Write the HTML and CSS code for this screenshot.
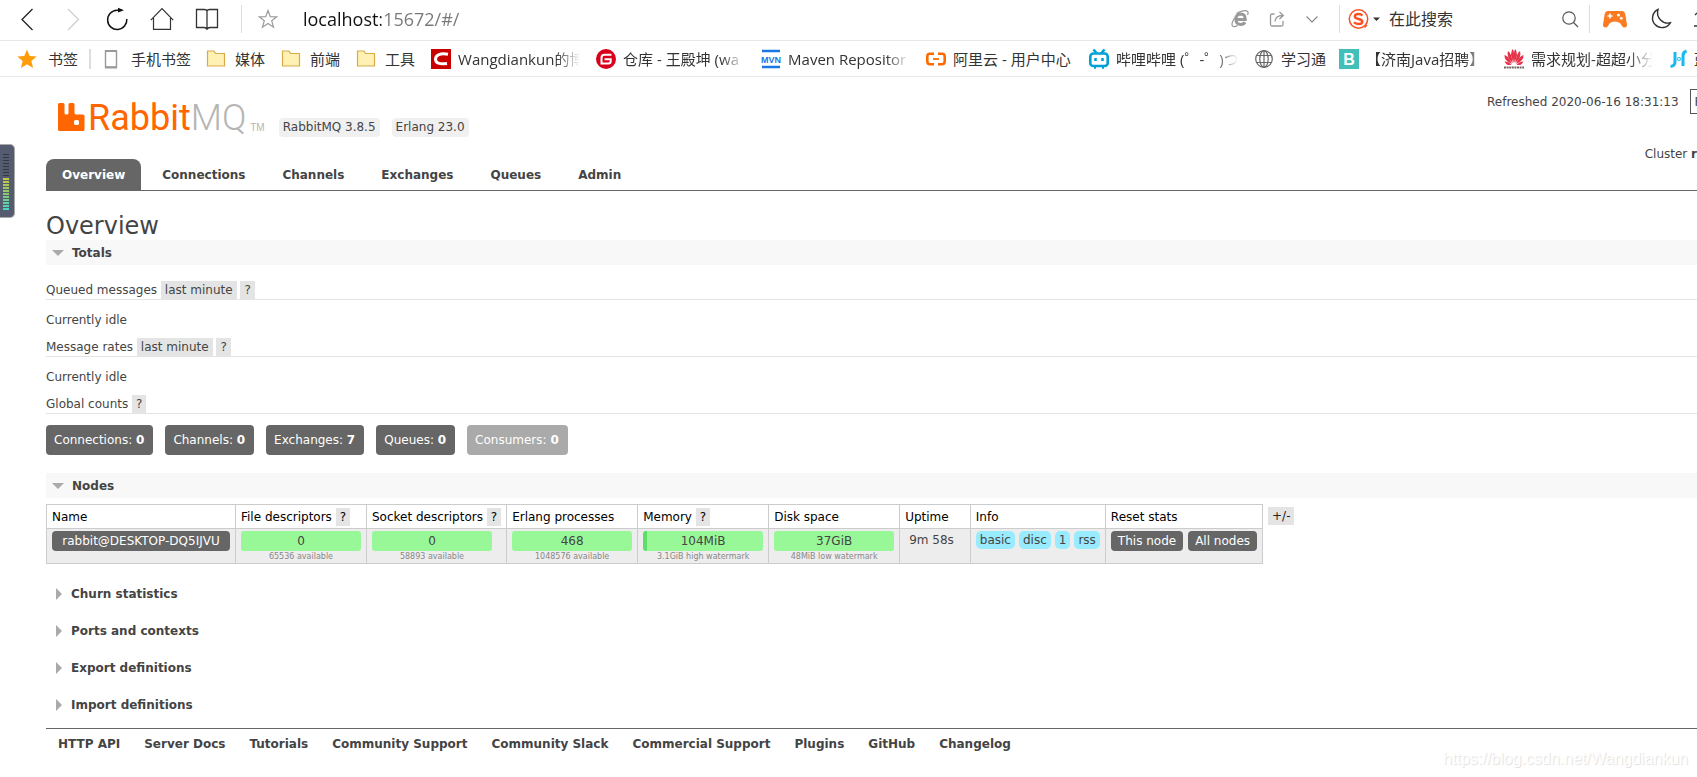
FILE: index.html
```html
<!DOCTYPE html>
<html lang="zh-CN">
<head>
<meta charset="utf-8">
<title>RabbitMQ Management</title>
<link rel="stylesheet" href="styles.css">
</head>
<body>
<div class="toolbar">
  <div class="nav-buttons">
    <button class="icon-button" aria-label="Back"><svg width="24" height="24" viewBox="0 0 24 24" fill="none" stroke="#222" stroke-width="1.300"><path d="M17.500 2L7 12.500L17.500 23"/></svg></button>
    <button class="icon-button" aria-label="Forward"><svg width="24" height="24" viewBox="0 0 24 24" fill="none" stroke="#ccc" stroke-width="1.200"><path d="M8 2L18.500 12.500L8 23"/></svg></button>
    <button class="icon-button" aria-label="Reload"><svg width="24" height="24" viewBox="0 0 24 24" fill="none" stroke="#111" stroke-width="1.500"><path d="M17 3.300H12A9.600 9.600 0 1 0 21.800 12"/><path d="M13 .800L19 3.200L13 5.500Z" fill="#111" stroke="none"/></svg></button>
    <button class="icon-button" aria-label="Home"><svg width="24" height="24" viewBox="0 0 24 24" fill="none" stroke="#333" stroke-width="1.200"><path d="M.800 13.200L12 1.500L23.200 13.200M3.500 11V22.300H20.500V11"/></svg></button>
    <button class="icon-button" aria-label="Reading list"><svg width="24" height="24" viewBox="0 0 24 24" fill="none" stroke="#333" stroke-width="1.300"><path d="M12 4Q11.500 2.500 9.500 2.500H1.500V20.500H9Q11.500 20.500 12 22.500Q12.500 20.500 15 20.500H22.500V2.500H14.500Q12.500 2.500 12 4V22"/></svg></button>
  </div>
  <span class="divider"></span>
  <button class="icon-button favorite" aria-label="Favorite"><svg width="20" height="20" viewBox="0 0 20 20" fill="none" stroke="#999" stroke-width="1.200"><path d="M10 1.500L12.300 7.600L18.800 7.800L13.700 11.800L15.500 18.200L10 14.500L4.500 18.200L6.300 11.800L1.200 7.800L7.700 7.600Z"/></svg></button>
  <input class="address" type="text" aria-label="Address" value="localhost:15672/#/">
  <div class="page-actions">
    <button class="icon-button" aria-label="Compatibility mode"><svg width="18" height="18" viewBox="0 0 18 18" fill="none" stroke="#999"><path d="M5 9.500H14.300Q14.300 4 9.800 4Q4.800 4.200 4.800 9.500Q5 14.500 9.800 14.500Q12.800 14.500 14 12.300" stroke-width="3"/><path d="M5.500 3.500Q14-1 16.800 1.700Q17.500 3 16.500 5M3.500 8Q-.500 14.500 1.800 16.300Q3.500 17.300 6.500 15.500" stroke-width="1.200"/></svg></button>
    <button class="icon-button" aria-label="Share"><svg width="16" height="16" viewBox="0 0 16 16" fill="none" stroke="#999" stroke-width="1.300"><path d="M5.500 3H3Q1.500 3 1.500 4.500V13.500Q1.500 15 3 15H12.500Q14 15 14 13.500V10"/><path d="M6 10.500Q6.500 4.500 13.500 4.500M10.500 1L14.300 4.500L10.500 8"/></svg></button>
    <button class="icon-button" aria-label="More"><svg width="14" height="14" viewBox="0 0 14 14" fill="none" stroke="#888" stroke-width="1.200"><path d="M1.500 4.500L7 10L12.500 4.500"/></svg></button>
  </div>
  <span class="divider"></span>
  <button class="icon-button engine" aria-label="Search engine"><svg width="32" height="22" viewBox="0 0 32 22"><circle cx="10.500" cy="11" r="9.200" fill="none" stroke="#fb5022" stroke-width="1.500"/><path d="M14.500 7.500Q13 6 10.500 6Q6.800 6 6.800 8.500Q6.800 10.300 10.500 11Q14.300 11.700 14.300 13.700Q14.300 16 10.500 16Q7.500 16 6 14.300" fill="none" stroke="#fb5022" stroke-width="2.400"/><path d="M16.500 19.500L19 17" stroke="#fb5022" stroke-width="1.500"/><path d="M25 9.500H32L28.500 13Z" fill="#333"/></svg></button>
  <input class="search" type="text" aria-label="Search" placeholder="在此搜索">
  <button class="icon-button" aria-label="Run search"><svg width="18" height="18" viewBox="0 0 18 18" fill="none" stroke="#555" stroke-width="1.200"><circle cx="8" cy="8" r="6.200"/><path d="M12.500 12.500L17 17"/></svg></button>
  <span class="divider search-end"></span>
  <div class="tool-actions">
    <button class="icon-button" aria-label="Games"><svg width="26" height="20" viewBox="0 0 26 20"><path d="M6 2H20Q22.500 2 23.300 5L25 16Q25 18.500 22 18.500Q20.500 18.500 18.500 14.500Q16 12.500 13 12.500Q10 12.500 7.500 14.500Q5.500 18.500 4 18.500Q1 18.500 1 16L2.700 5Q3.500 2 6 2Z" fill="#fb7a22"/><path d="M8 4.500V9.500M5.500 7H10.500" stroke="#fff" stroke-width="1.500"/><circle cx="16.500" cy="6.200" r="1.400" fill="#fff"/><circle cx="19.300" cy="9.300" r="1.400" fill="#fff"/></svg></button>
    <button class="icon-button" aria-label="Night mode"><svg width="22" height="22" viewBox="0 0 22 22" fill="none" stroke="#333" stroke-width="1.400"><path d="M8 1.500A9.500 9.500 0 1 0 20.300 14.800A10.500 10.500 0 0 1 8 1.500Z"/></svg></button>
    <button class="icon-button clipped" aria-label="Downloads"><svg width="20" height="20" viewBox="0 0 20 20" fill="none" stroke="#333" stroke-width="1.400"><path d="M0 17H20M1 6L3 4"/></svg></button>
  </div>
</div>

<nav class="bookmarks" aria-label="书签">
  <a class="bookmark root" href="#"><svg width="20" height="20" viewBox="0 0 20 20"><path d="M10 .500L12.700 7L19.700 7.400L14.300 11.900L16.100 19L10 15.200L3.900 19L5.700 11.900L.300 7.400L7.300 7Z" fill="#ff9c08"/></svg><span class="label">书签</span></a>
  <span class="bar"></span>
  <a class="bookmark phone" href="#"><svg width="14" height="20" viewBox="0 0 14 20"><rect x="1.500" y="2" width="11" height="16" fill="#fff" stroke="#999" stroke-width="1.400"/><path d="M1 2H13M1 18.500H13" stroke="#999" stroke-width="2"/></svg><span class="label">手机书签</span></a>
  <a class="bookmark folder" href="#"><svg width="20" height="20" viewBox="0 0 20 20"><path d="M1.500 2H8L9.500 4.500H18.500V17H1.500Z" fill="#fff0b3" stroke="#d8ab47" stroke-width="1.200"/></svg><span class="label">媒体</span></a>
  <a class="bookmark folder" href="#"><svg width="20" height="20" viewBox="0 0 20 20"><path d="M1.500 2H8L9.500 4.500H18.500V17H1.500Z" fill="#fff0b3" stroke="#d8ab47" stroke-width="1.200"/></svg><span class="label">前端</span></a>
  <a class="bookmark folder" href="#"><svg width="20" height="20" viewBox="0 0 20 20"><path d="M1.500 2H8L9.500 4.500H18.500V17H1.500Z" fill="#fff0b3" stroke="#d8ab47" stroke-width="1.200"/></svg><span class="label">工具</span></a>
  <a class="bookmark long" href="#"><svg width="20" height="20" viewBox="0 0 20 20"><rect width="20" height="20" fill="#c90000"/><path d="M17 5.200Q5 3.500 4.500 10Q4.500 16.200 16 14.500" fill="none" stroke="#fff" stroke-width="3"/></svg><span class="label">Wangdiankun的博</span></a>
  <a class="bookmark long" href="#"><svg width="20" height="20" viewBox="0 0 20 20"><circle cx="10" cy="10" r="10" fill="#d8001b"/><path d="M15.500 5.800H8.500Q5.500 5.800 5.500 8.800V14.500H12.500Q14.700 14.500 14.700 12.300V10.200H8.500" fill="none" stroke="#fff" stroke-width="2"/></svg><span class="label">仓库 - 王殿坤 (wa</span></a>
  <a class="bookmark long" href="#"><svg width="20" height="20" viewBox="0 0 20 20"><path d="M1 2H19M1 18H19" stroke="#1b77e4" stroke-width="2.600"/><text x="10" y="13.500" text-anchor="middle" class="mvn">MVN</text></svg><span class="label">Maven Repositor</span></a>
  <a class="bookmark long plain" href="#"><svg width="20" height="20" viewBox="0 0 20 20" fill="none" stroke="#ff6a00" stroke-width="2.600"><path d="M8 4.800H4Q1.300 4.800 1.300 7.500V12.500Q1.300 15.200 4 15.200H8M12 4.800H16Q18.700 4.800 18.700 7.500V12.500Q18.700 15.200 16 15.200H12"/><path d="M7 10H13" stroke-width="1.800"/></svg><span class="label">阿里云 - 用户中心</span></a>
  <a class="bookmark long" href="#"><svg width="20" height="20" viewBox="0 0 20 20" fill="none" stroke="#00a1d6" stroke-width="2.600"><rect x="1.300" y="4.500" width="17.400" height="12.500" rx="3"/><path d="M4.500 .500L7.500 4M15.500 .500L12.500 4M5 18.500H7M13 18.500H15"/><path d="M6.500 9V12M13.500 9V12"/></svg><span class="label">哔哩哔哩 (゜-゜)つ</span></a>
  <a class="bookmark globe" href="#"><svg width="20" height="20" viewBox="0 0 20 20" fill="none" stroke="#666" stroke-width="1.200"><circle cx="10" cy="10" r="8.300"/><ellipse cx="10" cy="10" rx="4.200" ry="8.300"/><path d="M10 1.700V18.300M2.600 6.500H17.400M2.600 13.500H17.400"/></svg><span class="label">学习通</span></a>
  <a class="bookmark long" href="#"><svg width="20" height="20" viewBox="0 0 20 20"><rect width="20" height="20" fill="#41bfb8"/><text x="10" y="16" text-anchor="middle" class="boss">B</text></svg><span class="label">【济南Java招聘】</span></a>
  <a class="bookmark long" href="#"><svg width="20" height="20" viewBox="0 0 20 20"><g fill="#e8344a"><path d="M9.500 14Q5 4 8.800 0Q11 3 9.500 14ZM10.500 14Q9 3 11.200 0Q15 4 10.500 14Z"/><path d="M8.700 14Q2 8 4 2Q7.500 4 8.700 14ZM11.300 14Q12.500 4 16 2Q18 8 11.300 14Z"/><path d="M8 15Q0 12 .500 6Q5 7 8 15ZM12 15Q15 7 19.500 6Q20 12 12 15Z"/><path d="M7.500 15.600Q3 17.500 .500 12.500Q4 12 7.500 15.600ZM12.500 15.600Q17 17.500 19.500 12.500Q16 12 12.500 15.600Z"/></g><path d="M0 18.500H20" stroke="#766" stroke-width="2" stroke-dasharray="2 .600"/></svg><span class="label">需求规划-超超小分</span></a>
  <a class="bookmark last" href="#"><svg width="20" height="20" viewBox="0 0 20 20" fill="none" stroke="#18b9f2" stroke-width="3"><path d="M6 3V13Q6 17 1.500 17.500M17.500 2Q14 3 14 7V17"/><circle cx="10" cy="10" r=".500"/></svg><span class="label">蓝</span></a>
</nav>

<div class="page">
  <header class="header">
    <div class="brand">
      <a class="logo" href="#" aria-label="RabbitMQ"><svg width="27" height="29" viewBox="0 0 27 29"><path d="M1.500 0H5Q6.500 0 6.500 1.500V10Q6.500 11.500 8 11.500H9Q10.500 11.500 10.500 10V1.500Q10.500 0 12 0H15Q16.500 0 16.500 1.500V10Q16.500 11.500 18 11.500H25Q26.500 11.500 26.500 13V26.500Q26.500 28 25 28H1.500Q0 28 0 26.500V1.500Q0 0 1.500 0ZM17.500 17Q16 17 16 18.500V20.500Q16 22 17.500 22H19.500Q21 22 21 20.500V18.500Q21 17 19.500 17Z" fill="#f60" fill-rule="evenodd"/></svg><span class="logo-rabbit">Rabbit</span><span class="logo-mq">MQ</span><span class="logo-tm">TM</span></a>
      <span class="version">RabbitMQ 3.8.5</span>
      <span class="version">Erlang 23.0</span>
    </div>
    <div class="status">
      <label class="refresh">Refreshed 2020-06-16 18:31:13 <select class="interval"><option>Refresh</option></select></label>
      <div class="cluster">Cluster <b>r</b></div>
    </div>
  </header>
  <nav class="tabs">
    <a class="tab selected" href="#">Overview</a>
    <a class="tab" href="#">Connections</a>
    <a class="tab" href="#">Channels</a>
    <a class="tab" href="#">Exchanges</a>
    <a class="tab" href="#">Queues</a>
    <a class="tab" href="#">Admin</a>
  </nav>
  <main>
    <h1 class="title">Overview</h1>
    <section>
      <h2 class="section-title open">Totals</h2>
      <div class="totals">
        <h3 class="subhead">Queued messages <button class="popup">last minute</button> <button class="popup">?</button></h3>
        <p class="idle">Currently idle</p>
        <h3 class="subhead">Message rates <button class="popup">last minute</button> <button class="popup">?</button></h3>
        <p class="idle">Currently idle</p>
        <h3 class="subhead">Global counts <button class="popup">?</button></h3>
        <div class="counts">
          <a class="count" href="#">Connections: <b>0</b></a>
          <a class="count" href="#">Channels: <b>0</b></a>
          <a class="count" href="#">Exchanges: <b>7</b></a>
          <a class="count" href="#">Queues: <b>0</b></a>
          <span class="count disabled">Consumers: <b>0</b></span>
        </div>
      </div>
    </section>
    <section>
      <h2 class="section-title open">Nodes</h2>
      <div class="nodes">
        <table class="list">
          <thead>
            <tr><th>Name</th><th>File descriptors <button class="popup">?</button></th><th>Socket descriptors <button class="popup">?</button></th><th>Erlang processes</th><th>Memory <button class="popup">?</button></th><th>Disk space</th><th>Uptime</th><th>Info</th><th>Reset stats</th></tr>
          </thead>
          <tbody>
            <tr>
              <td><a class="node name" href="#">rabbit@DESKTOP-DQ5IJVU</a></td>
              <td><div class="meter">0</div><div class="limit">65536 available</div></td>
              <td><div class="meter">0</div><div class="limit">58893 available</div></td>
              <td><div class="meter">468</div><div class="limit">1048576 available</div></td>
              <td><div class="meter used">104MiB</div><div class="limit">3.1GiB high watermark</div></td>
              <td><div class="meter">37GiB</div><div class="limit">48MiB low watermark</div></td>
              <td class="uptime">9m 58s</td>
              <td><div class="tags"><span class="tag">basic</span><span class="tag">disc</span><span class="tag">1</span><span class="tag">rss</span></div></td>
              <td><div class="resets"><button class="node">This node</button><button class="node">All nodes</button></div></td>
            </tr>
          </tbody>
        </table>
        <button class="popup columns">+/-</button>
      </div>
    </section>
    <div class="collapsed">
      <h2 class="section-title">Churn statistics</h2>
      <h2 class="section-title">Ports and contexts</h2>
      <h2 class="section-title">Export definitions</h2>
      <h2 class="section-title">Import definitions</h2>
    </div>
  </main>
  <footer class="footer">
    <a href="#">HTTP API</a>
    <a href="#">Server Docs</a>
    <a href="#">Tutorials</a>
    <a href="#">Community Support</a>
    <a href="#">Community Slack</a>
    <a href="#">Commercial Support</a>
    <a href="#">Plugins</a>
    <a href="#">GitHub</a>
    <a href="#">Changelog</a>
  </footer>
</div>
<div class="gauge"><span class="gauge-idle"></span><span class="gauge-level"></span></div>
<div class="watermark">https://blog.csdn.net/Wangdiankun</div>
</body>
</html>
```
FILE: styles.css
```css
* { box-sizing: border-box; }
body {
  margin: 0;
  min-height: 100vh;
  overflow: hidden;
  background: #fff;
  color: #444;
  font: 12px/18px "DejaVu Sans", sans-serif;
}
a { color: inherit; text-decoration: none; }
h1, h2, h3, p { margin: 0; }
button, input, select { font: inherit; color: inherit; }
button { padding: 0; border: 0; background: none; }
svg { display: block; flex: none; }

/* browser toolbar */
.toolbar {
  display: flex;
  align-items: center;
  height: 41px;
  padding: 0 0 2px 15px;
  border-bottom: 1px solid #e8e8e8;
  overflow: hidden;
  font-family: "Open Sans", "Noto Sans CJK SC", sans-serif;
}
.icon-button { flex: none; }
.nav-buttons { display: flex; gap: 21px; margin-right: 22px; }
.divider { flex: none; width: 1px; height: 28px; background: #ddd; }
.favorite { margin-left: 16px; }
.address {
  flex: 1;
  min-width: 0;
  margin-left: 25px;
  padding: 0;
  border: 0;
  font-size: 18px;
  line-height: 26px;
  background: linear-gradient(90deg, #111 78px, #777 78px);
  -webkit-background-clip: text;
  background-clip: text;
  -webkit-text-fill-color: transparent;
}
.page-actions { display: flex; align-items: center; gap: 20px; margin-right: 20px; }
.engine { margin-left: 8px; }
.search {
  width: 162px;
  margin: 0 10px 0 9px;
  padding: 0;
  border: 0;
  font-size: 16px;
  line-height: 24px;
}
.search::placeholder { color: #333; }
.search-end { margin: 0 12px 0 10px; }
.tool-actions { display: flex; align-items: center; gap: 22px; }
.clipped { width: 3px; overflow: hidden; }

/* bookmarks bar */
.bookmarks {
  display: flex;
  align-items: center;
  height: 36px;
  padding: 0 0 0 17px;
  border-bottom: 1px solid #e8e8e8;
  overflow: hidden;
  color: #333;
  font-family: "Open Sans", "Noto Sans CJK SC", sans-serif;
  font-size: 15px;
  line-height: 24px;
  white-space: nowrap;
}
.bookmark { display: flex; flex: none; align-items: center; gap: 9px; margin-right: 16px; }
.bookmark.root { gap: 11px; margin-right: 11px; }
.bookmark.phone { gap: 13px; margin-right: 15px; }
.bookmark.long { gap: 7px; }
.bookmark.plain { margin-right: 14px; }
.bookmark.globe { gap: 7px; margin-right: 13px; }
.bookmark.last { gap: 5px; margin-right: 0; }
.bar { flex: none; width: 2px; height: 20px; margin-right: 13px; background: #ddd; }
.long .label {
  width: 122px;
  overflow: hidden;
  -webkit-mask-image: linear-gradient(90deg, #000 98px, transparent);
  mask-image: linear-gradient(90deg, #000 98px, transparent);
}
.plain .label { -webkit-mask-image: none; mask-image: none; }
.mvn { fill: #1b77e4; font: bold 9px "Liberation Sans", sans-serif; }
.boss { fill: #fff; font: bold 16px "Liberation Sans", sans-serif; }

/* management page */
.page { padding-left: 46px; }
.header { display: flex; justify-content: space-between; height: 82px; }
.brand { display: flex; align-items: flex-start; padding: 26px 0 0 12px; }
.logo { display: flex; align-items: flex-start; margin-right: 14px; line-height: 30px; }
.logo-rabbit, .logo-mq { font-family: Roboto, sans-serif; font-size: 36px; }
.logo-rabbit { margin-left: 3px; color: #f60; }
.logo-mq { color: #b5b5b5; font-weight: 300; }
.logo-tm { padding: 10px 0 0 4px; color: #b5b5b5; font: 10px/30px "Liberation Sans", sans-serif; }
.version {
  margin: 15px 12px 0 0;
  padding: 0 4px;
  border-radius: 4px;
  background: #f0f0f0;
  line-height: 19px;
}
.status { display: flex; flex-direction: column; gap: 31px; width: 210px; padding-top: 12px; overflow: hidden; white-space: nowrap; }
.refresh { display: flex; align-items: center; gap: 11px; }
.interval {
  flex: none;
  width: 160px;
  height: 25px;
  padding: 0 4px;
  border: 1px solid #555;
  background: #fff;
  appearance: none;
}
.cluster { align-self: flex-end; }
.tabs { display: flex; gap: 5px; border-bottom: 1px solid #666; font-weight: bold; }
.tab { padding: 7px 16px 6px; border-radius: 8px 8px 0 0; }
.tab.selected { background: #666; color: #fff; }
.title { margin: 21px 0 0; font-size: 24px; font-weight: normal; line-height: 28px; }
.section-title { display: flex; align-items: center; padding: 4px 0 3px 10px; font-size: 12px; line-height: 18px; }
.section-title::before {
  content: "";
  margin-right: 9px;
  border-top: 6px solid transparent;
  border-bottom: 6px solid transparent;
  border-left: 6px solid #aaa;
}
.section-title.open { padding-left: 6px; background: #f8f8f8; }
.section-title.open::before {
  margin-right: 8px;
  border-top: 6px solid #aaa;
  border-right: 6px solid transparent;
  border-bottom: 0;
  border-left: 6px solid transparent;
}
.totals { padding-top: 16px; }
.subhead { border-bottom: 1px solid #e4e4e4; font-size: 12px; font-weight: normal; line-height: 18px; }
.popup { padding: 0 4px; background: #e4e4e4; line-height: 18px; }
.idle { padding: 11px 0 9px; }
.counts { display: flex; gap: 12px; padding: 11px 0 18px; }
.count { padding: 6px 9px 6px 8px; border-radius: 4px; background: #666; color: #fff; }
.count.disabled { background: #aaa; }
.nodes { display: flex; align-items: flex-start; gap: 5px; padding-top: 6px; }
.list { border-collapse: collapse; white-space: nowrap; }
.list th, .list td { border: 1px solid #ccc; text-align: left; vertical-align: top; }
.list th { padding: 3px 5px 2px; color: #000; font-weight: normal; }
.list td { padding: 2px 5px 0; background: #ededed; }
.node { display: inline-block; padding: 0 7px; border-radius: 4px; background: #666; color: #fff; line-height: 20px; }
.name { min-width: 178px; text-align: center; }
.meter { width: 120px; border-radius: 3px; background: #98f898; line-height: 20px; text-align: center; }
.meter.used { background: linear-gradient(90deg, #5fdd6a 4px, #98f898 4px); }
.limit { width: 120px; color: #888; font-size: 8px; line-height: 12px; text-align: center; }
.list .uptime { padding-left: 9px; padding-right: 16px; }
.tags, .resets { display: flex; align-items: flex-start; }
.tags { gap: 4px; }
.resets { gap: 5px; }
.tag { padding: 0 4px; border-radius: 5px; background: #99ebff; line-height: 18px; }
.columns { margin-top: 3px; color: #222; }
.collapsed { display: flex; flex-direction: column; gap: 12px; padding: 17px 0 11px; }
.footer { display: flex; gap: 24px; padding: 6px 12px; border-top: 1px solid #666; font-weight: bold; }

/* desktop overlays */
.gauge {
  position: absolute;
  left: 0;
  top: 144px;
  width: 15px;
  height: 74px;
  padding: 9px 4px 8px 3px;
  border: 1px solid #aaa;
  border-left: 0;
  border-radius: 0 5px 5px 0;
  background: #565c70;
}
.gauge-idle, .gauge-level { display: block; width: 6px; }
.gauge-idle { height: 24px; background: repeating-linear-gradient(#333844 0 1px, #565c70 1px 3px); }
.gauge-level {
  height: 32px;
  background: repeating-linear-gradient(transparent 0 2px, #565c70 2px 3px), linear-gradient(#c8c840, #8cc870 50%, #40d8c8);
}
.watermark {
  position: absolute;
  right: 9px;
  bottom: 8px;
  color: #fff;
  font: 16px/20px "Liberation Sans", sans-serif;
  text-shadow: 1px 1px 1px #ddd;
}
```
